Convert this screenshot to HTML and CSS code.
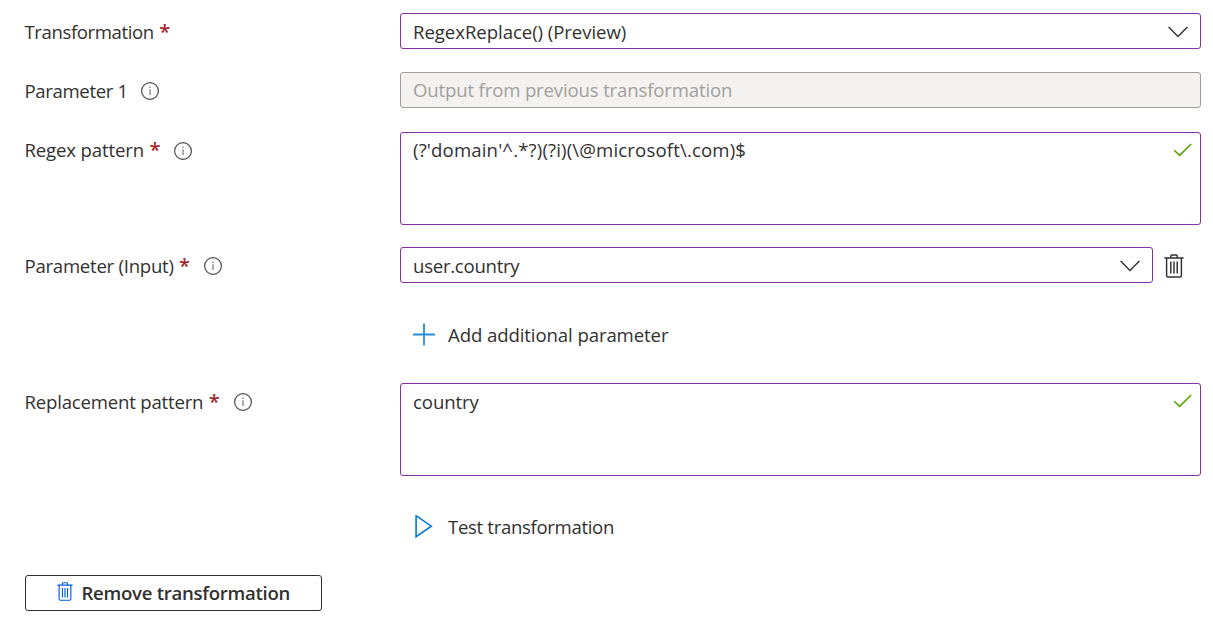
FILE: index.html
```html
<!DOCTYPE html>
<html lang="en">
<head>
<meta charset="utf-8">
<title>Transformation</title>
<link rel="stylesheet" href="styles.css">
</head>
<body>
<svg class="defs" width="0" height="0">
  <symbol id="info" viewBox="0 0 20 20"><circle cx="10" cy="10" r="8.4" fill="none" stroke="#4a4a4a" stroke-width="1.2"/><path d="M10 8.2V14M10 5.6V7" stroke="#777" stroke-width="1.2"/></symbol>
  <symbol id="chevron" viewBox="0 0 20 12"><path d="M.6 1 10 10.4 19.4 1" fill="none" stroke="#323130" stroke-width="1.4"/></symbol>
  <symbol id="check" viewBox="0 0 20 14"><path d="M1.2 7.2 6.6 12.4 18.2 1" fill="none" stroke="#57a300" stroke-width="1.5"/></symbol>
  <symbol id="trash" viewBox="0 0 20 24"><path d="M.4 4H19.6M6.8 4V2Q6.8 1 7.8 1H12.2Q13.2 1 13.2 2V4M2.6 4V21.5Q2.6 23 4.1 23H15.9Q17.4 23 17.4 21.5V4M6.8 7.5V19.5M10 7.5V19.5M13.2 7.5V19.5" fill="none" stroke="currentColor" stroke-width="1.45"/></symbol>
</svg>
<main class="form">
  <div class="row">
    <div class="label"><span class="t-transformation">Transformation</span><span class="req">*</span></div>
    <div class="field select"><span class="t-regexreplace">RegexReplace() (Preview)</span><svg class="chevron"><use href="#chevron"/></svg></div>
  </div>
  <div class="row row-param1">
    <div class="label"><span class="t-param1">Parameter 1</span><svg class="info"><use href="#info"/></svg></div>
    <div class="field disabled"><span class="t-output">Output from previous transformation</span></div>
  </div>
  <div class="row row-regex">
    <div class="label"><span class="t-regex">Regex pattern</span><span class="req">*</span><svg class="info"><use href="#info"/></svg></div>
    <div class="field area"><span class="t-pattern">(?'domain'^.*?)(?i)(\@microsoft\.com)$</span><svg class="check"><use href="#check"/></svg></div>
  </div>
  <div class="row row-input">
    <div class="label"><span class="t-input">Parameter (Input)</span><span class="req">*</span><svg class="info"><use href="#info"/></svg></div>
    <div class="with-delete">
      <div class="field select"><span class="t-user">user.country</span><svg class="chevron"><use href="#chevron"/></svg></div>
      <svg class="trash"><use href="#trash"/></svg>
    </div>
  </div>
  <div class="command command-add"><svg class="command-icon" viewBox="0 0 24 24"><path d="M1 11.5H23M12 .5V22.5" stroke="#0078d4" stroke-opacity=".85" stroke-width="1.8"/></svg><span class="t-add">Add additional parameter</span></div>
  <div class="row row-replacement">
    <div class="label"><span class="t-replacement">Replacement pattern</span><span class="req">*</span><svg class="info"><use href="#info"/></svg></div>
    <div class="field area"><span class="t-country">country</span><svg class="check"><use href="#check"/></svg></div>
  </div>
  <div class="command command-test"><svg class="command-icon" viewBox="0 0 24 24"><path d="M4.1 .7V21.7L19.3 11.2Z" fill="none" stroke="#0078d4" stroke-width="1.6"/></svg><span class="t-test">Test transformation</span></div>
  <button class="remove"><svg class="remove-icon"><use href="#trash"/></svg><span class="t-remove">Remove transformation</span></button>
</main>
</body>
</html>
```
FILE: styles.css
```css
* { box-sizing: border-box; }
body { margin: 0; background: #fff; color: #323130; font: 18.6px/26px "Open Sans", "Noto Sans", sans-serif; }
.defs { position: absolute; }
.form { display: flex; flex-direction: column; padding: 13px 12px 0 25px; }
.row { display: grid; grid-template-columns: 375px 1fr; align-items: start; }
.row-param1 { margin-top: 23px; }
.row-regex { margin-top: 24px; }
.row-input { margin-top: 22px; }
.row-replacement { margin-top: 35px; }
.label { display: flex; align-items: center; height: 36px; margin-left: -.5px; white-space: nowrap; }
.label span { margin-top: 2px; }
.row-regex .label span { margin-top: 0; }
.label .req { color: #a4262c; margin-left: 5.4px; font-size: 20px; font-weight: 600; }
.info { width: 20px; height: 20px; margin-left: 13px; margin-top: 1px; }
.row-param1 .info { margin-left: 12.5px; }
.field { display: flex; justify-content: space-between; align-items: center; height: 36px; padding: 0 12px; border: 1px solid #8a2da5; border-radius: 3px; background: #fff; white-space: nowrap; }
.field.select span { margin-top: 2px; }
.field.select .chevron { margin-top: 1px; }
.field.disabled { background: #f3f2f1; border-color: #a19f9d; color: #a19f9d; }
.field.area { height: 93px; align-items: flex-start; padding: 5px 7px 0 12px; }
.row-regex .field.area { padding-top: 4px; }
.row-regex .check { margin-top: 6px; }
.chevron { width: 20px; height: 12px; }
.check { width: 20px; height: 14px; margin-top: 5px; }
.with-delete { display: grid; grid-template-columns: 753px 20px; column-gap: 11px; align-items: center; }
.trash { width: 20px; height: 24px; margin-top: 2px; }
.command { display: flex; align-items: center; height: 26px; margin-left: 387px; gap: 12px; }
.command-icon { width: 24px; height: 24px; }
.command-add { margin-top: 39px; }
.command-test { margin-top: 38px; }
.remove { display: flex; align-items: center; width: 297px; height: 36px; margin-top: 35px; padding: 0 0 0 31px; gap: 8.5px; border: 1px solid #323130; border-radius: 3px; background: #fff; color: #323130; font: inherit; font-weight: 600; white-space: nowrap; }
.remove-icon { width: 16px; height: 19px; margin-top: -3px; color: #015cda; }
.t-transformation { letter-spacing: -.4px; }
.t-regexreplace { letter-spacing: -.06px; }
.t-param1 { letter-spacing: -.36px; }
.t-output { letter-spacing: -.16px; }
.t-regex { letter-spacing: -.15px; }
.t-pattern { letter-spacing: .15px; }
.t-input { letter-spacing: -.26px; }
.t-user { letter-spacing: -.27px; }
.t-add { letter-spacing: -.1px; }
.t-replacement { letter-spacing: -.2px; }
.t-country { letter-spacing: -.1px; }
.t-test { letter-spacing: -.33px; }
.t-remove { letter-spacing: -.28px; }
```
